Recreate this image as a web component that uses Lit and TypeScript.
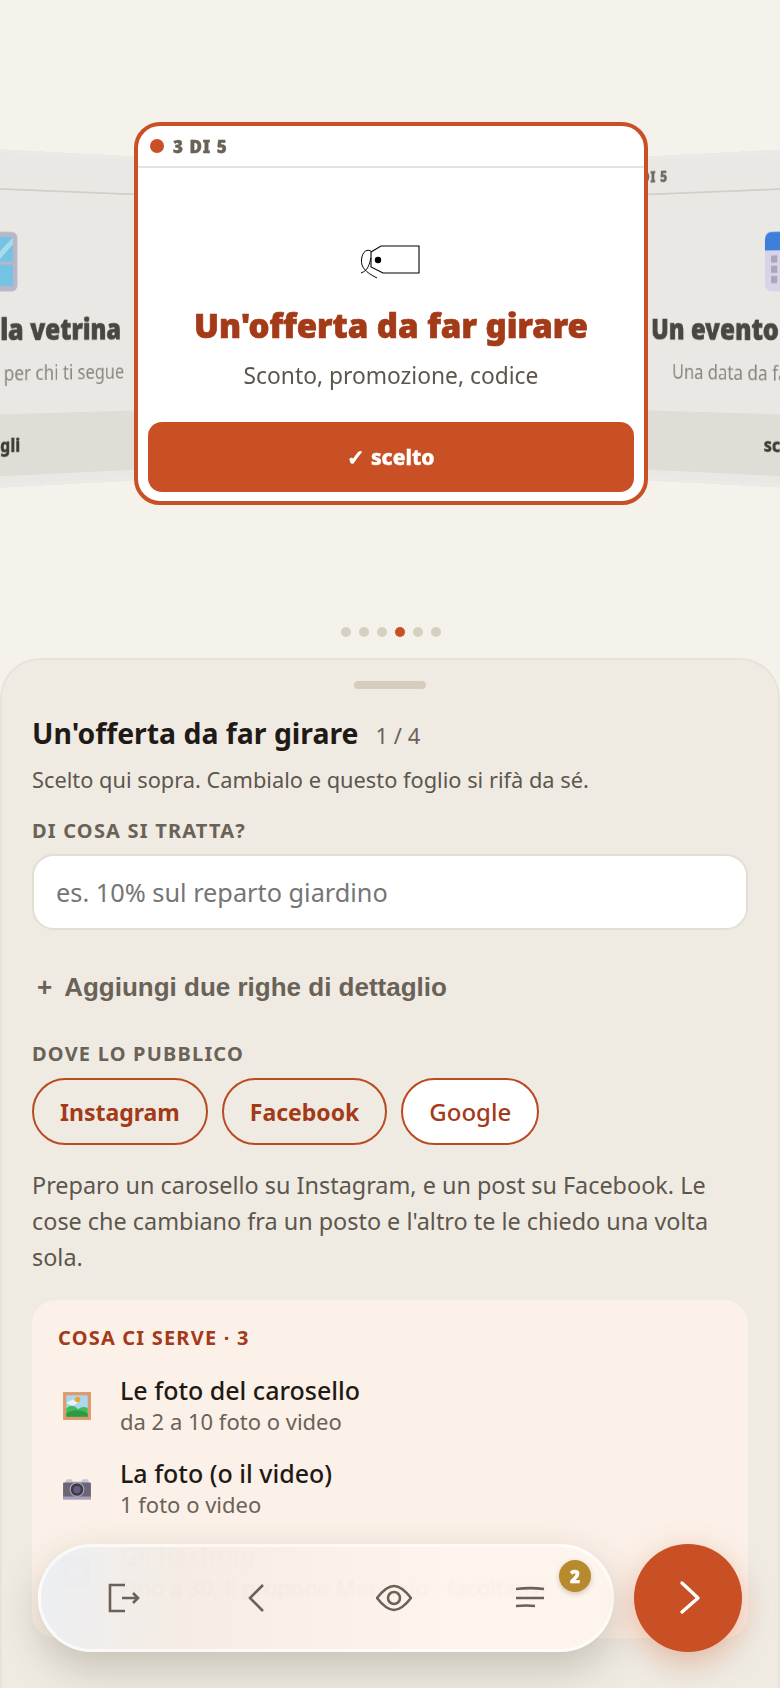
import { LitElement, css, html, svg } from 'lit';
import { customElement } from 'lit/decorators.js';
import { classMap } from 'lit/directives/class-map.js';

type Pick = { step: number; title: string; sub: string; icon: string; pos: 'left' | 'center' | 'right' };

const tagIcon = svg`
  <path d="M11 18 L21 12 H59 V39 H23 L11 33 Z" fill="#fff" stroke="#000" stroke-width="1.1"/>
  <circle cx="18" cy="26" r="3.2" fill="#000"/>
  <path d="M12 18 C8 14 2 17 1.500 26 C1 33 5 38 17 44 M11 24 C9 30 9 36 1 39" fill="none" stroke="#000" stroke-width="1"/>`;

const windowIcon = svg`
  <rect x="6" y="2" width="48" height="58" rx="6" fill="#b9b6c6"/>
  <rect x="11" y="7" width="38" height="24" fill="#74c3e4"/>
  <path d="M49 7 V14 L32 31 H24 Z" fill="#a8dcea"/>
  <rect x="11" y="34" width="38" height="21" fill="#74c3e4"/>`;

const calendarIcon = svg`
  <rect x="6" y="2" width="50" height="58" rx="7" fill="#d9d3ea"/>
  <path d="M6 20 V9 a7 7 0 0 1 7 -7 H49 a7 7 0 0 1 7 7 V20 Z" fill="#3f7fdc"/>
  <g fill="#aaa5b8">
    <rect x="13" y="25" width="7" height="7"/><rect x="13" y="35" width="7" height="7"/><rect x="13" y="45" width="7" height="7"/>
    <rect x="27" y="25" width="7" height="7"/><rect x="27" y="35" width="7" height="7"/><rect x="27" y="45" width="7" height="7"/>
    <rect x="41" y="25" width="7" height="7"/><rect x="41" y="35" width="7" height="7"/>
  </g>`;

const icons: Record<string, unknown> = { tag: tagIcon, window: windowIcon, calendar: calendarIcon };

const picks: Pick[] = [
  { step: 2, title: 'Tieni viva la vetrina', sub: 'Due belle parole per chi ti segue', icon: 'window', pos: 'left' },
  { step: 4, title: 'Un evento da segnare', sub: 'Una data da far ricordare ora', icon: 'calendar', pos: 'right' },
  { step: 3, title: "Un'offerta da far girare", sub: 'Sconto, promozione, codice', icon: 'tag', pos: 'center' },
];

const pictureIcon = svg`
  <rect x="1" y="1" width="26" height="26" fill="#dd9a6c"/>
  <rect x="4" y="4" width="20" height="20" fill="#a9d8ef"/>
  <path d="M4 11 L10 8 L15 11 L10 14 Z" fill="#e8f2f8"/>
  <circle cx="14.5" cy="8" r="2.6" fill="#eda72c"/>
  <path d="M4 16 C9 12 12 14 15 17 C18 15 21 14 24 16 V24 H4 Z" fill="#45b95a"/>
  <path d="M4 21 C10 17 18 17 24 21 V24 H4 Z" fill="#2e9a47"/>`;

const cameraIcon = svg`
  <path d="M3 7 L5 5 H9 L10 7 H18 L19 5 H24 L25 7 V9 H3 Z" fill="#c9c4d2"/>
  <rect x="1" y="8" width="26" height="15" rx="1" fill="#6b6675"/>
  <rect x="1" y="21" width="26" height="3" fill="#a6a0bd"/>
  <circle cx="14" cy="14.5" r="6.4" fill="#3f3b48" stroke="#b3aec0" stroke-width="1"/>
  <circle cx="14" cy="14.5" r="3.4" fill="#6a5a84"/>`;

const hashIcon = svg`
  <rect x="1" y="1" width="26" height="26" rx="3" fill="#4f9be0"/>
  <path d="M10 7 L9 21 M18 7 L17 21 M6 11 H22 M6 17 H22" stroke="#fff" stroke-width="2"/>`;

const needs = [
  { icon: pictureIcon, title: 'Le foto del carosello', sub: 'da 2 a 10 foto o video' },
  { icon: cameraIcon, title: 'La foto (o il video)', sub: '1 foto o video' },
  { icon: hashIcon, title: 'Gli hashtag', sub: 'Fino a 30, li propone Mercurio · facoltativi' },
];

const channels = [
  { name: 'Instagram', on: true },
  { name: 'Facebook', on: true },
  { name: 'Google', on: false },
];

@customElement('app-root')
export class AppRoot extends LitElement {
  private renderCard(p: Pick) {
    const active = p.pos === 'center';
    return html`
      <article class=${classMap({ card: true, [p.pos]: true })}>
        <header class="card-head">
          <span class="dot"></span>
          <span class="step">${p.step} DI 5</span>
        </header>
        <div class="card-body">
          <svg class="card-icon" viewBox="0 0 62 62">${icons[p.icon]}</svg>
          <h2>${p.title}</h2>
          <p>${p.sub}</p>
        </div>
        <div class="pick">${active ? '✓ scelto' : 'scegli'}</div>
      </article>
    `;
  }

  render() {
    return html`
      <section class="stage">
        ${picks.map((p) => this.renderCard(p))}
        <div class="dots">
          ${[0, 1, 2, 3, 4, 5].map((i) => html`<i class=${i === 3 ? 'on' : ''}></i>`)}
        </div>
      </section>

      <section class="sheet">
        <div class="handle"></div>
        <div class="title-row">
          <h1>Un'offerta da far girare</h1>
          <span>1 / 4</span>
        </div>
        <p class="hint">Scelto qui sopra. Cambialo e questo foglio si rifà da sé.</p>

        <div class="label">DI COSA SI TRATTA?</div>
        <input class="field" placeholder="es. 10% sul reparto giardino" />

        <button class="more"><span>+</span>Aggiungi due righe di dettaglio</button>

        <div class="label">DOVE LO PUBBLICO</div>
        <div class="chips">
          ${channels.map((c) => html`<span class=${classMap({ chip: true, on: c.on })}>${c.name}</span>`)}
        </div>
        <p class="plan">
          Preparo un carosello su Instagram, e un post su Facebook. Le cose che cambiano fra un posto e
          l'altro te le chiedo una volta sola.
        </p>

        <div class="needs">
          <div class="needs-label">COSA CI SERVE · 3</div>
          ${needs.map(
            (n) => html`
              <div class="need">
                <svg viewBox="0 0 28 28">${n.icon}</svg>
                <div>
                  <div class="need-title">${n.title}</div>
                  <div class="need-sub">${n.sub}</div>
                </div>
              </div>
            `
          )}
        </div>
      </section>

      <nav class="bar">
        <button aria-label="Esci">
          <svg viewBox="0 0 36 36"><path d="M21 5 H6 V31 H21 M18 18 H34 M29 13 L34 18 L29 23"/></svg>
        </button>
        <button aria-label="Indietro">
          <svg viewBox="0 0 36 36"><path d="M23 5 L10 18 L23 31"/></svg>
        </button>
        <button aria-label="Anteprima">
          <svg viewBox="0 0 36 36">
            <path d="M1 18 C8 9 13 6 18 6 C23 6 28 9 35 18 C28 27 23 30 18 30 C13 30 8 27 1 18 Z"/>
            <circle cx="18" cy="18" r="6"/>
          </svg>
        </button>
        <button aria-label="Elenco">
          <svg viewBox="0 0 36 36"><path d="M4 9 C12 8 24 8 32 9 M4 18 H32 M4 26 C10 25.500 18 25.500 23 26"/></svg>
          <b class="badge">2</b>
        </button>
      </nav>
      <button class="next" aria-label="Avanti">
        <svg viewBox="0 0 36 36"><path d="M12 3 L28 18 L12 32"/></svg>
      </button>
    `;
  }

  static styles = css`
    :host {
      display: block;
      position: relative;
      height: 1688px;
      overflow: hidden;
      background: #f5f2ec;
      color: #1f1a16;
      font-family: 'Noto Sans', 'Open Sans', sans-serif;
    }
    h1, h2, p { margin: 0; }

    .stage {
      position: relative;
      height: 658px;
      box-sizing: border-box;
      padding-top: 122px;
    }
    .card {
      box-sizing: border-box;
      width: 514px;
      height: 383px;
      margin-left: 134px;
      display: flex;
      flex-direction: column;
      border: 4px solid #c94f24;
      border-radius: 26px;
      background: #fff;
      position: relative;
      overflow: hidden;
    }
    /* neighbours sit behind the selected card, turned away from it */
    .card.left, .card.right {
      position: absolute;
      top: 122px;
      left: 0;
      border-color: #ebeae6;
      background: #e9e8e4;
    }
    .card.left { transform: translate(-394px, 5px) perspective(1870px) rotateY(30deg) scale(0.885); }
    .card.right { transform: translate(396px, 5px) perspective(1870px) rotateY(-30deg) scale(0.885); }

    .card-head {
      height: 40px;
      flex: none;
      display: flex;
      align-items: center;
      gap: 9px;
      padding-left: 12px;
      border-bottom: 2px solid #e6e3dd;
      font-size: 17px;
      font-weight: 900;
      letter-spacing: 1px;
      color: #6b6257;
      -webkit-text-stroke: 0.4px currentColor;
    }
    .dot { width: 14px; height: 14px; border-radius: 50%; background: #c94f24; }
    .left .dot, .right .dot { background: #a8a29a; }
    .left .card-head, .right .card-head { padding-left: 14px; border-color: #d2cfc8; color: #6f6c66; }

    .card-body {
      flex: 1;
      display: flex;
      flex-direction: column;
      align-items: center;
      justify-content: flex-start;
      padding-top: 66px;
    }
    .card-icon { width: 62px; height: 62px; }
    .left .card-icon, .right .card-icon { width: 72px; height: 72px; margin: -21px 0 11px; }
    .card h2 {
      margin-top: 8px;
      font-size: 33px;
      line-height: 44px;
      font-weight: 900;
      color: #a33a18;
      white-space: nowrap;
      -webkit-text-stroke: 0.7px currentColor;
    }
    .card p {
      margin-top: 12px;
      font-size: 22.8px;
      line-height: 32px;
      color: #5d564d;
      white-space: nowrap;
    }
    .left h2, .right h2 { color: #4a4742; }
    .left p, .right p { color: #8b8882; }

    .pick {
      height: 70px;
      flex: none;
      margin: 0 10px 9px;
      border-radius: 14px;
      display: flex;
      align-items: center;
      justify-content: center;
      background: #c94f24;
      color: #fff;
      font-size: 21px;
      font-weight: 800;
      -webkit-text-stroke: 0.4px currentColor;
    }
    .left .pick, .right .pick { background: #e0ddd7; color: #3f3c38; }

    .dots {
      position: absolute;
      left: 341px;
      top: 627px;
      display: flex;
      gap: 8px;
    }
    .dots i { width: 10px; height: 10px; border-radius: 50%; background: #d6cfc2; }
    .dots i.on { background: #c94f24; }

    .sheet {
      box-sizing: border-box;
      height: 1100px;
      padding: 21px 30px 0;
      border: 2px solid #e8e3da;
      border-bottom: 0;
      border-radius: 40px 40px 0 0;
      background: #efebe3;
    }
    .handle { width: 72px; height: 8px; margin: 0 auto; border-radius: 4px; background: #d6cdbf; }
    .title-row { display: flex; align-items: baseline; gap: 17px; margin-top: 24px; }
    .title-row h1 { font-size: 28.4px; line-height: 40px; font-weight: 700; color: #1f1a16; }
    .title-row span { font-size: 22px; color: #6b6257; }
    .hint { margin-top: 12px; font-size: 21.8px; line-height: 30px; color: #5d564d; }
    .label {
      margin-top: 23px;
      font-size: 20px;
      line-height: 26px;
      font-weight: 700;
      letter-spacing: 1.2px;
      color: #6b6257;
    }
    .field {
      display: block;
      box-sizing: border-box;
      width: 100%;
      height: 76px;
      margin-top: 10px;
      padding: 0 22px;
      border: 2px solid #e3ded4;
      border-radius: 22px;
      background: #fff;
      font: 25.3px 'Noto Sans', sans-serif;
    }
    .field::placeholder { color: #757575; }
    .more {
      display: flex;
      align-items: center;
      gap: 12px;
      height: 40px;
      margin-top: 37px;
      padding: 0 0 0 5px;
      border: 0;
      background: none;
      font: bold 26px 'Liberation Sans', Arial, sans-serif;
      color: #6b6257;
    }
    .more + .label { margin-top: 34px; }
    .chips { display: flex; gap: 14px; margin-top: 11px; }
    .chip {
      box-sizing: border-box;
      height: 67px;
      padding: 0 26px;
      display: flex;
      align-items: center;
      border: 2px solid #bb4a22;
      border-radius: 34px;
      background: #fff;
      font-size: 24px;
      font-weight: 500;
      color: #a33a18;
    }
    .chip.on { background: transparent; font-size: 23px; font-weight: 700; }
    .plan { margin-top: 22px; font-size: 23.4px; line-height: 36px; color: #5d564d; }

    .needs {
      box-sizing: border-box;
      height: 338px;
      margin-top: 25px;
      padding: 25px 26px;
      border-radius: 24px;
      background: #fbf1e8;
    }
    .needs-label {
      margin-bottom: 18px;
      font-size: 20px;
      line-height: 26px;
      font-weight: 700;
      letter-spacing: 1.2px;
      color: #a33a18;
    }
    .need { display: flex; align-items: center; gap: 28px; height: 69px; margin-bottom: 14px; }
    .need svg { width: 30px; height: 30px; margin: 4px 0 0 4px; flex: none; }
    .need-title { font-size: 25px; line-height: 34px; font-weight: 500; color: #1f1a16; }
    .need-sub { font-size: 22px; line-height: 28px; color: #6b6257; }
    /* the last row runs under the floating bar */
    .need:last-child .need-title { opacity: 0.35; }
    .need:last-child svg { opacity: 0.5; }

    .bar {
      position: absolute;
      left: 38px;
      top: 1544px;
      box-sizing: border-box;
      width: 576px;
      height: 108px;
      padding: 0 13px;
      display: grid;
      grid-template-columns: repeat(4, 1fr);
      border: 3px solid rgba(255, 255, 255, 0.6);
      border-radius: 54px;
      background: linear-gradient(90deg, rgba(236, 238, 242, 0.965), rgba(245, 236, 227, 0.965) 25%, rgba(253, 244, 236, 0.965) 70%);
      backdrop-filter: blur(1px);
      box-shadow: 0 16px 40px rgba(70, 60, 35, 0.24);
    }
    .bar button {
      position: relative;
      display: flex;
      align-items: center;
      justify-content: center;
      border: 0;
      padding: 0;
      background: none;
    }
    .bar svg { width: 36px; height: 36px; fill: none; stroke: #6b6257; stroke-width: 2.6; }
    .badge {
      position: absolute;
      left: 97px;
      top: 13px;
      width: 32px;
      height: 32px;
      display: grid;
      place-items: center;
      border-radius: 50%;
      background: #b88a2e;
      box-shadow: 0 2px 5px rgba(70, 50, 10, 0.25);
      color: #fff;
      font: 900 17px 'Noto Sans', sans-serif;
      -webkit-text-stroke: 0.5px currentColor;
    }
    .next {
      position: absolute;
      left: 634px;
      top: 1544px;
      width: 108px;
      height: 108px;
      display: grid;
      place-items: center;
      border: 0;
      padding: 0;
      border-radius: 50%;
      background: #c94f24;
      box-shadow: 0 10px 32px rgba(201, 79, 36, 0.35);
    }
    .next svg {
      width: 36px;
      height: 36px;
      fill: none;
      stroke: #fff;
      stroke-width: 3.4;
      stroke-linecap: round;
      stroke-linejoin: round;
    }
  `;
}
